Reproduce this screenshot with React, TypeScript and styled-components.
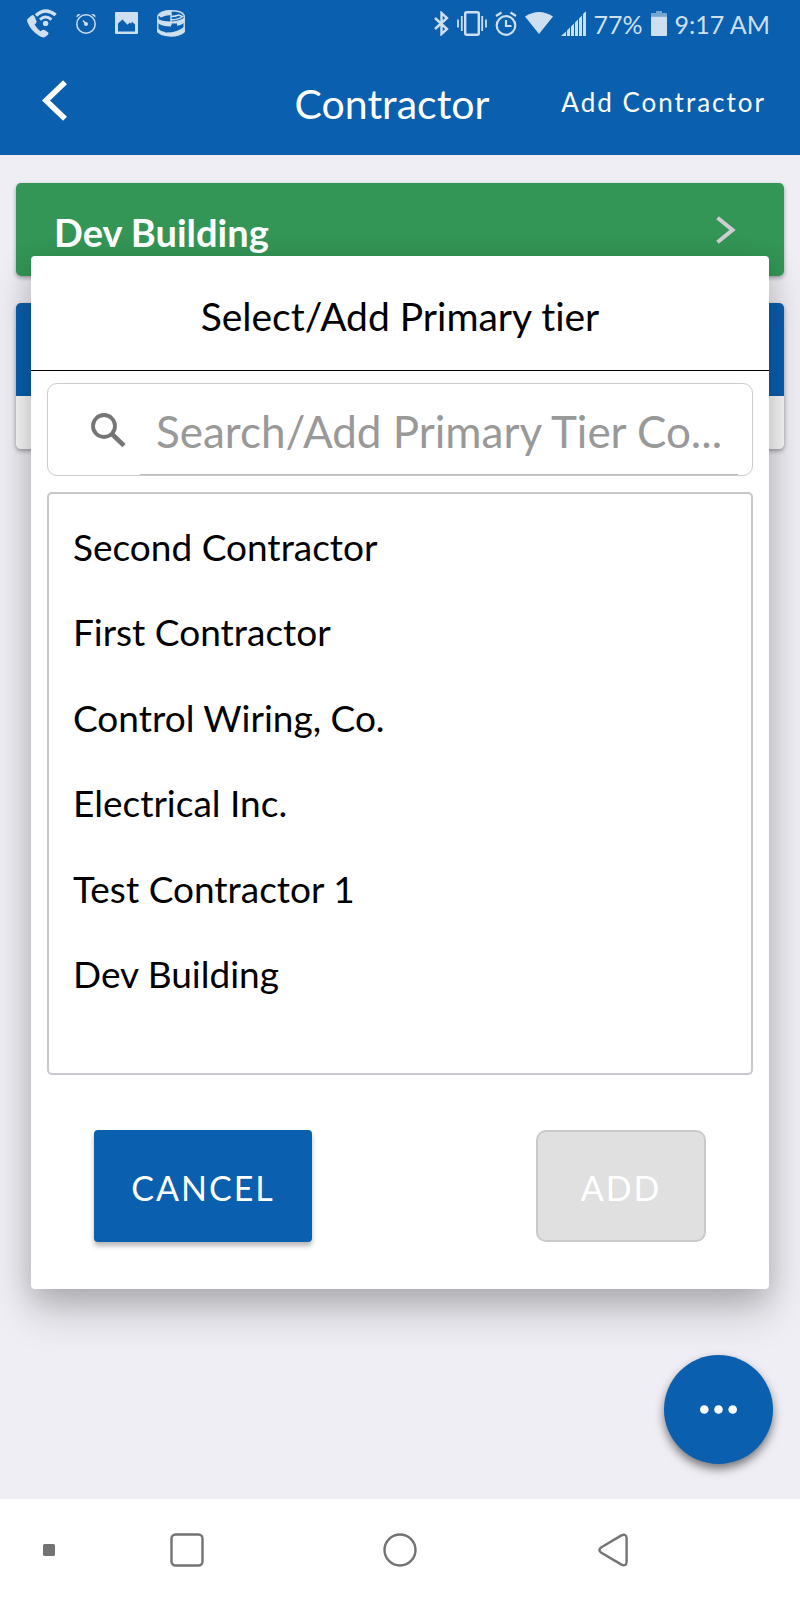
import React from "react";
import styled, { createGlobalStyle, css } from "styled-components";

const blue = "#0a5fae";
const statusTint = "#cedfef";
const navGray = "#727372";

const GlobalStyle = createGlobalStyle`
  *, *::before, *::after { box-sizing: border-box; }
  body { margin: 0; }
  body, button, input {
    font-family: Lato, "Open Sans", sans-serif;
    font-variant-ligatures: none;
  }
  button { border: 0; padding: 0; background: none; cursor: pointer; }
  svg { display: block; flex: none; }
`;

const Screen = styled.div`
  position: relative;
  display: flex;
  flex-direction: column;
  min-height: 100vh;
  background: #efeef4;
`;

const Header = styled.header`
  background: ${blue};
  color: #fff;
`;

const StatusBar = styled.div`
  display: flex;
  justify-content: space-between;
  align-items: center;
  height: 46px;
  padding: 0 30px 0 27px;
  color: ${statusTint};
`;

const StatusGroup = styled.div<{ $gap: number }>`
  display: flex;
  align-items: center;
  gap: ${(p) => p.$gap}px;
`;

const StatusText = styled.span`
  padding-top: 2px;
  font-size: 25px;
  line-height: 32px;
`;

const AppBar = styled.div`
  display: grid;
  grid-template-columns: 1fr auto 1fr;
  align-items: center;
  height: 109px;
  padding: 0 34px 0 18px;
`;

const BackButton = styled.button`
  justify-self: start;
  padding: 10px 24px;
  color: #fff;
`;

const Title = styled.h1`
  margin: 0;
  padding-top: 6px;
  font-size: 41px;
  font-weight: 400;
  line-height: 48px;
`;

const HeaderAction = styled.button`
  justify-self: end;
  padding-top: 2px;
  color: #fff;
  font-size: 26px;
  line-height: 32px;
  letter-spacing: 2px;
  white-space: nowrap;
`;

const Main = styled.main`
  position: relative;
  flex: 1;
  display: flex;
  flex-direction: column;
  gap: 27px;
  padding: 28px 16px;
`;

const Card = styled.section`
  overflow: hidden;
  border-radius: 5px;
  box-shadow: 0 2px 4px rgba(0, 0, 0, 0.35);
`;

const CardHead = styled.button<{ $color: string }>`
  display: flex;
  justify-content: space-between;
  align-items: center;
  width: 100%;
  height: 93px;
  padding: 0 48px 0 38px;
  background: ${(p) => p.$color};
  color: #fff;
  font-size: 38px;
  font-weight: 700;
  line-height: 46px;
`;

const CardLabel = styled.span`
  padding-top: 4px;
`;

const CardFoot = styled.div`
  height: 53px;
  background: #fafafa;
`;

const Dialog = styled.div`
  position: absolute;
  z-index: 2;
  top: 256px;
  left: 31px;
  right: 31px;
  display: flex;
  flex-direction: column;
  border-radius: 4px;
  background: #fff;
  box-shadow: 0 22px 44px rgba(0, 0, 0, 0.2), 0 8px 28px rgba(0, 0, 0, 0.14);
`;

const DialogTitle = styled.h2`
  margin: 0;
  padding: 36px 0 30px;
  border-bottom: 1px solid #000;
  color: #000;
  font-size: 39px;
  font-weight: 400;
  line-height: 48px;
  text-align: center;
`;

const DialogBody = styled.div`
  display: flex;
  flex-direction: column;
  gap: 16px;
  padding: 12px 16px 0;
`;

const SearchBox = styled.label`
  display: flex;
  align-items: stretch;
  height: 93px;
  padding: 0 14px 0 43px;
  border: 1px solid #ccccd0;
  border-radius: 10px;

  svg { align-self: center; margin-right: 14px; }
`;

const SearchInput = styled.input`
  flex: 1;
  min-width: 0;
  padding: 4px 0 0 16px;
  border: 0;
  border-bottom: 1px solid #bdbdc0;
  outline: 0;
  background: none;
  font-size: 44px;
  text-overflow: ellipsis;

  &::placeholder { color: #999; opacity: 1; }
`;

const List = styled.ul`
  margin: 0;
  padding: 10px 0 56px;
  border: 2px solid #c9c8ce;
  border-radius: 5px;
  list-style: none;
  display: grid;
  grid-auto-rows: 1fr;
  min-height: 583px;
`;

const Option = styled.button`
  width: 100%;
  height: 100%;
  padding: 0 24px;
  color: #000;
  font-size: 37px;
  line-height: 48px;
  text-align: left;
`;

const Actions = styled.div`
  display: flex;
  justify-content: space-between;
  padding: 55px 63px 47px;
`;

const ActionButton = styled.button<{ $primary?: boolean }>`
  height: 112px;
  padding: 4px 30px 0;
  color: #fff;
  font-size: 34px;
  line-height: 44px;
  letter-spacing: 2px;

  ${(p) =>
    p.$primary
      ? css`
          min-width: 218px;
          border-radius: 4px;
          background: ${blue};
          box-shadow: 0 4px 5px rgba(0, 0, 0, 0.28);
        `
      : css`
          min-width: 170px;
          border: 2px solid #c9c9c9;
          border-radius: 10px;
          background: #e0e0e0;
        `}
`;

const MoreButton = styled.button`
  position: absolute;
  right: 27px;
  bottom: 35px;
  display: grid;
  place-items: center;
  width: 109px;
  height: 109px;
  border-radius: 50%;
  background: ${blue};
  box-shadow: 0 5px 10px rgba(0, 0, 0, 0.5);
`;

const NavBar = styled.nav`
  display: grid;
  grid-template-columns: 98px 178px 1fr 178px 98px;
  place-items: center;
  height: 101px;
  background: #fff;
`;

const NavButton = styled.button`
  padding: 8px;
`;

const WifiCallIcon = () => (
  <svg width="30" height="30" viewBox="0 0 30 30" fill="none" stroke="currentColor" aria-hidden>
    <path
      d="M.5 11 4.500 7.400Q6.600 6.400 7.600 8.600L9.600 13.500Q9.800 15 7.600 16.500 10 20.800 13.400 23.200L15.400 22Q17 21.200 18.500 22.600L21.200 24.600Q22 26 20.500 27.200L17.600 29.200Q15.500 30 12.500 28 3.500 22.500 .4 14 -.2 12 .5 11Z"
      fill="currentColor"
      stroke="none"
    />
    <circle cx="18.600" cy="15.400" r="2.700" fill="currentColor" stroke="none" />
    <path d="M13 11.600Q18.600 6.400 24.400 11.600" strokeWidth="3" />
    <path d="M9 7.400Q18.600-1.400 28.600 7" strokeWidth="3.400" />
  </svg>
);

const ThinAlarmIcon = () => (
  <svg width="20" height="22" viewBox="0 0 20 22" fill="none" stroke="currentColor" aria-hidden>
    <circle cx="10" cy="12" r="9.200" strokeWidth="1.500" />
    <circle cx="10" cy="12" r="2" fill="currentColor" stroke="none" />
    <path d="m10 12-3-3.500" strokeWidth="1.500" />
    <path d="M.6 5.500Q0 1.500 4.800 2.200ZM19.400 5.500Q20 1.500 15.200 2.200Z" fill="currentColor" stroke="none" />
  </svg>
);

const PictureIcon = () => (
  <svg width="23" height="22" viewBox="0 0 23 22" aria-hidden>
    <path
      fillRule="evenodd"
      fill="currentColor"
      d="M1 0H22Q23 0 23 1V21Q23 22 22 22H1Q0 22 0 21V1Q0 0 1 0ZM3 19.500H20V12.500L17 9.800 16 11.800 14.800 10.500 12.500 12.800 7.500 7.500 3 11.500Z"
    />
  </svg>
);

const RibbonIcon = () => (
  <svg width="28" height="27" viewBox="0 0 28 27" fill="none" stroke="currentColor" aria-hidden>
    <path d="M.8 22V6Q3 .8 14 .8T27.200 5.500V22" strokeWidth="1.400" />
    <path d="M14 .5V15M14 9.800Q22 9.800 25.500 6.500L22 5Q18 6.500 14 6.500" strokeWidth="1.400" />
    <path d="M14 .5Q5 .5 1.500 5.500L4 7.500Q8 5 14 5Z" fill="currentColor" stroke="none" />
    <path d="M.4 8.500Q4 11.500 14 11.500V16.500Q4 16.500 .4 12.500Z" fill="currentColor" stroke="none" />
    <path d="M14 11.500Q23 11 27.600 7.500V12.500Q24 15.500 20 15.800V13.500H14Z" fill="currentColor" stroke="none" />
    <path d="M27.600 16.500V22.500Q23 26.500 14 26.800L8 26V22.500Q20 23 27.600 16.500Z" fill="currentColor" stroke="none" />
    <path d="M.4 18Q3 21 8 22V26Q3 25 .4 22.500Z" fill="currentColor" stroke="none" />
  </svg>
);

const BluetoothIcon = () => (
  <svg width="15" height="25" viewBox="0 0 15 25" fill="none" stroke="currentColor" strokeWidth="2.400" aria-hidden>
    <path d="m1 7 12 11-5.500 5V2L13 7 1 18" />
  </svg>
);

const VibrateIcon = () => (
  <svg width="30" height="25" viewBox="0 0 30 25" fill="none" stroke="currentColor" aria-hidden>
    <rect x="8.200" y="1.200" width="13.600" height="22.600" rx="1.500" strokeWidth="2.400" />
    <path d="M4.800 5V20M25.200 5V20M1 8.500V16.500M29 8.500V16.500" strokeWidth="1.800" />
  </svg>
);

const AlarmIcon = () => (
  <svg width="22" height="25" viewBox="0 0 22 25" fill="none" stroke="currentColor" strokeWidth="2.200" aria-hidden>
    <circle cx="11" cy="14.500" r="9.300" />
    <path d="M11 9V15H16.500M1 5 6.500 1.500M21 5 15.500 1.500" />
  </svg>
);

const WifiIcon = () => (
  <svg width="28" height="22" viewBox="0 0 28 22" aria-hidden>
    <path d="M0 4.500Q14-4.500 28 4.500L14 22Z" fill="currentColor" />
  </svg>
);

const SignalIcon = () => (
  <svg width="25" height="25" viewBox="0 0 25 25" fill="currentColor" aria-hidden>
    <path d="M0 25 5 20.500V25ZM6 19.500 9 16.500V25H6ZM10 15.500 13 12.500V25H10ZM14 11.500 17 8.500V25H14ZM18 7.500 21 4.500V25H18ZM22 3 25 .3V25H22Z" />
  </svg>
);

const BatteryIcon = () => (
  <svg width="16" height="25" viewBox="0 0 16 25" fill="currentColor" aria-hidden>
    <path d="M5 0H11V2H15Q16 2 16 3V5.500H0V3Q0 2 1 2H5Z" opacity=".55" />
    <path d="M0 5.500H16V24Q16 25 15 25H1Q0 25 0 24Z" />
  </svg>
);

const BackIcon = () => (
  <svg width="25" height="41" viewBox="0 0 25 41" fill="none" stroke="currentColor" strokeWidth="5.600" aria-hidden>
    <path d="M23 2.200 4 20.500 23 38.800" />
  </svg>
);

const ChevronIcon = () => (
  <svg width="20" height="28" viewBox="0 0 20 28" fill="none" stroke="#cfcdd2" strokeWidth="4" aria-hidden>
    <path d="M1.500 1.800 16.500 14 1.500 26.200" />
  </svg>
);

const SearchIcon = () => (
  <svg width="35" height="34" viewBox="0 0 35 34" fill="none" stroke="#757575" aria-hidden>
    <circle cx="13" cy="13" r="11" strokeWidth="3.800" />
    <path d="M21.500 21.500 33 32.600" strokeWidth="4.600" />
  </svg>
);

const DotsIcon = () => (
  <svg width="37" height="9" viewBox="0 0 37 9" fill="#fff" aria-hidden>
    <circle cx="4.300" cy="4.500" r="4.300" />
    <circle cx="18.500" cy="4.500" r="4.300" />
    <circle cx="32.700" cy="4.500" r="4.300" />
  </svg>
);

const contractors = [
  "Second Contractor",
  "First Contractor",
  "Control Wiring, Co.",
  "Electrical Inc.",
  "Test Contractor 1",
  "Dev Building",
];

export default function App() {
  return (
    <>
      <GlobalStyle />
      <Screen>
        <Header>
          <StatusBar>
            <StatusGroup $gap={19}>
              <WifiCallIcon />
              <ThinAlarmIcon />
              <PictureIcon />
              <RibbonIcon />
            </StatusGroup>
            <StatusGroup $gap={8}>
              <BluetoothIcon />
              <VibrateIcon />
              <AlarmIcon />
              <WifiIcon />
              <SignalIcon />
              <StatusText>77%</StatusText>
              <BatteryIcon />
              <StatusText>9:17 AM</StatusText>
            </StatusGroup>
          </StatusBar>
          <AppBar>
            <BackButton aria-label="Back">
              <BackIcon />
            </BackButton>
            <Title>Contractor</Title>
            <HeaderAction>Add Contractor</HeaderAction>
          </AppBar>
        </Header>

        <Main>
          <Card>
            <CardHead $color="#339656">
              <CardLabel>Dev Building</CardLabel>
              <ChevronIcon />
            </CardHead>
          </Card>
          <Card>
            <CardHead $color={blue} aria-label="Primary tier" />
            <CardFoot />
          </Card>
          <MoreButton aria-label="More">
            <DotsIcon />
          </MoreButton>
        </Main>

        <Dialog role="dialog" aria-labelledby="dialog-title">
          <DialogTitle id="dialog-title">Select/Add Primary tier</DialogTitle>
          <DialogBody>
            <SearchBox>
              <SearchIcon />
              <SearchInput
                type="text"
                aria-label="Search or add contractor"
                placeholder="Search/Add Primary Tier Co..."
              />
            </SearchBox>
            <List>
              {contractors.map((name) => (
                <li key={name}>
                  <Option>{name}</Option>
                </li>
              ))}
            </List>
          </DialogBody>
          <Actions>
            <ActionButton $primary>CANCEL</ActionButton>
            <ActionButton disabled>ADD</ActionButton>
          </Actions>
        </Dialog>

        <NavBar>
          <NavButton aria-label="Hide navigation bar">
            <svg width="12" height="12" viewBox="0 0 12 12" aria-hidden>
              <rect width="12" height="12" rx="1.500" fill={navGray} />
            </svg>
          </NavButton>
          <NavButton aria-label="Recent apps">
            <svg width="34" height="34" viewBox="0 0 34 34" aria-hidden>
              <rect x="1.500" y="1.500" width="31" height="31" rx="4" fill="none" stroke={navGray} strokeWidth="2.400" />
            </svg>
          </NavButton>
          <NavButton aria-label="Home">
            <svg width="34" height="34" viewBox="0 0 34 34" aria-hidden>
              <circle cx="17" cy="17" r="15.500" fill="none" stroke={navGray} strokeWidth="2.400" />
            </svg>
          </NavButton>
          <NavButton aria-label="Back">
            <svg width="30" height="34" viewBox="0 0 30 34" aria-hidden>
              <path
                d="M2.600 14.800 23.400 2.400Q28.200.2 28.600 5V29Q28.200 33.800 23.400 31.600L2.600 19.200Q.2 17 2.600 14.800Z"
                fill="none"
                stroke={navGray}
                strokeWidth="2.400"
              />
            </svg>
          </NavButton>
        </NavBar>
      </Screen>
    </>
  );
}
